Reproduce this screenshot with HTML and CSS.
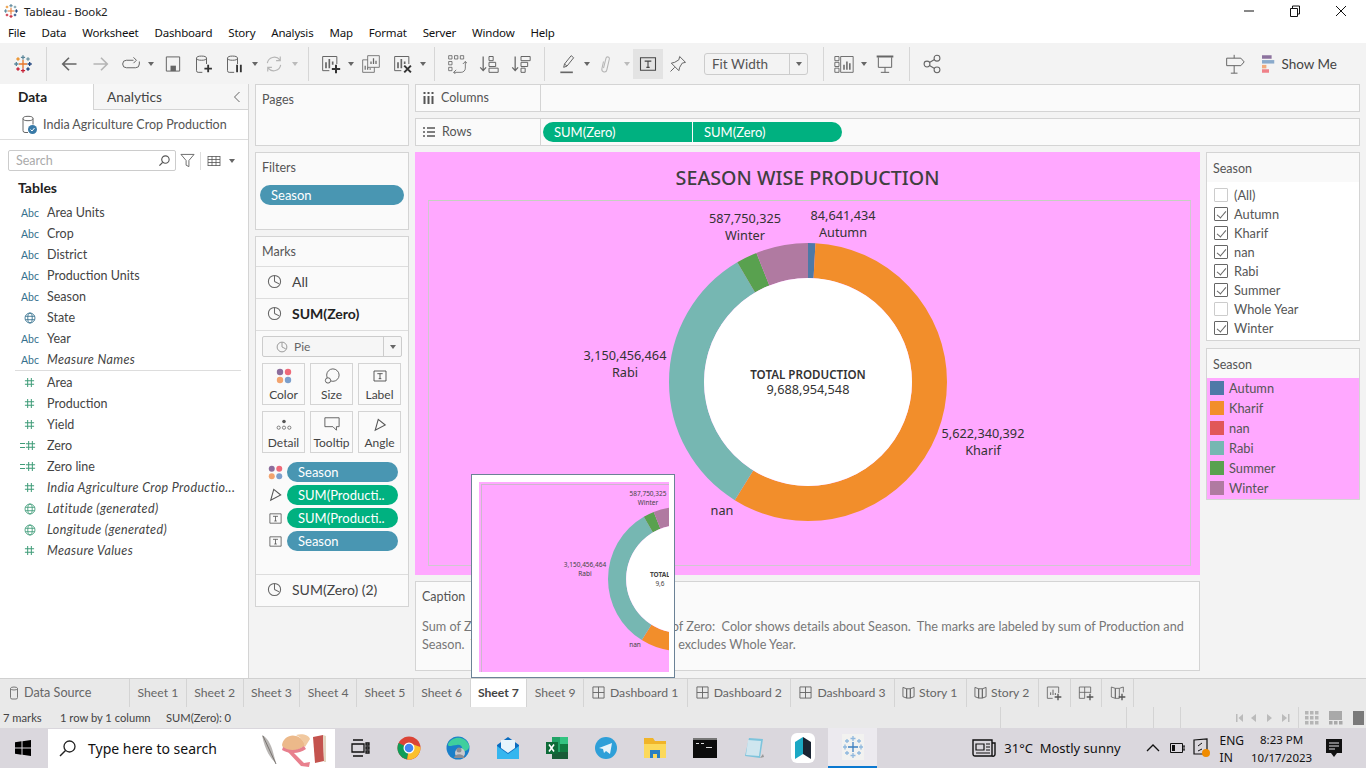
FILE: index.html
```html
<!DOCTYPE html>
<html lang="en">
<head>
    <meta charset="UTF-8">
    <title>Tableau - Book2</title>
    <link rel="stylesheet" href="styles.css">
</head>
<body>
    <!-- shared icons -->
    <svg class="defs" width="0" height="0">
        <symbol id="i-logo" viewBox="0 0 24 24"><g fill="none" stroke-width="1.6"><path d="M12 7v10M7 12h10" stroke="#e8762b"/><path d="M12 1.5v5M9.5 4h5" stroke="#5b879b"/><path d="M12 17.5v5M9.5 20h5" stroke="#c72035"/><path d="M1.500 12h5M4 9.5v5" stroke="#59879b"/><path d="M17.5 12h5M20 9.5v5" stroke="#1f447e"/><path d="M6 4v4M4 6h4" stroke="#eb912b"/><path d="M18 4v4M16 6h4" stroke="#7099a6"/><path d="M6 16v4M4 18h4" stroke="#c72035"/><path d="M18 16v4M16 18h4" stroke="#1f447e"/></g></symbol>
        <symbol id="i-back" viewBox="0 0 24 24"><path d="M21 12H5M12 4.5L4.5 12l7.5 7.5" fill="none" stroke="currentColor" stroke-width="2"/></symbol>
        <symbol id="i-fwd" viewBox="0 0 24 24"><path d="M3 12h16M12 4.5l7.5 7.5-7.5 7.5" fill="none" stroke="currentColor" stroke-width="2"/></symbol>
        <symbol id="i-redo" viewBox="0 0 24 24"><path d="M15 7.5H6.5a4.5 4.5 0 0 0 0 9h11a4.5 4.5 0 0 0 4.5-4.5V9M15 4l3.500 3.500L15 11" fill="none" stroke="currentColor" stroke-width="1.2"/></symbol>
        <symbol id="i-save" viewBox="0 0 24 24"><path d="M4 3.500h16v17H4z" fill="none" stroke="currentColor" stroke-width="1.2"/><path d="M9 14h6.500v6.500H9z" fill="currentColor"/></symbol>
        <symbol id="i-dbadd" viewBox="0 0 24 24"><g fill="none" stroke="currentColor" stroke-width="1.2"><ellipse cx="9" cy="5" rx="6" ry="2.5"/><path d="M3 5v15a2 2 0 0 0 2 2h5M15 5v7"/></g><path d="M17 13v9M12.5 17.5h9" stroke="#333" stroke-width="2.2"/></symbol>
        <symbol id="i-dbpause" viewBox="0 0 24 24"><g fill="none" stroke="currentColor" stroke-width="1.2"><ellipse cx="9" cy="5" rx="6" ry="2.5"/><path d="M3 5v15a2 2 0 0 0 2 2h6M15 5v7"/></g><path d="M14.5 13v9M19 13v9" stroke="#333" stroke-width="2.2"/></symbol>
        <symbol id="i-refresh" viewBox="0 0 24 24"><path d="M4 11a8.500 8.500 0 0 1 15-4M20 13a8.500 8.500 0 0 1-15 4M19.500 3v5h-5M4.500 21v-5h5" fill="none" stroke="currentColor" stroke-width="1.4"/></symbol>
        <symbol id="i-sheetadd" viewBox="0 0 24 24"><path d="M10 20H2V3h17v9" fill="none" stroke="currentColor" stroke-width="1.2"/><path d="M6 10v7M10 6v11M14 9v4" stroke="currentColor" stroke-width="2"/><path d="M18 13v10M13 18h10" stroke="#333" stroke-width="2.4"/></symbol>
        <symbol id="i-dup" viewBox="0 0 24 24"><path d="M8 2h14v14H8z" fill="#f3f3f3" stroke="currentColor"/><path d="M12 12V9M15 12V5M18 12V8" stroke="currentColor" stroke-width="1.5"/><path d="M8 7H2v15h14v-6" fill="none" stroke="currentColor"/><path d="M5 19v-5M8 19v-3M11 19v-2" stroke="currentColor" stroke-width="1.4"/></symbol>
        <symbol id="i-clear" viewBox="0 0 24 24"><path d="M10 20H2V3h17v9" fill="none" stroke="currentColor" stroke-width="1.2"/><path d="M6 10v7M10 6v11M14 9v3" stroke="currentColor" stroke-width="2"/><path d="M13.500 14l8 8M21.500 14l-8 8" stroke="#333" stroke-width="2.4"/></symbol>
        <symbol id="i-swap" viewBox="0 0 24 24"><g fill="none" stroke="currentColor"><path d="M2 2h4v4H2zM9 2h4v4H9zM16 2h4v4h-4zM2 9h4v4H2zM2 16h4v4H2zM8 22h9a5 5 0 0 0 5-5V9"/><path d="M19 12l3-3 3 3M11 19l-3 3 3 3"/></g></symbol>
        <symbol id="i-sortasc" viewBox="0 0 24 24"><path d="M5 3v17M1.500 16L5 20l3.500-4" fill="none" stroke="currentColor" stroke-width="1.5"/><path d="M12 3h5v5h-5zM12 10h8v5h-8zM12 17h11v5H12z" fill="none" stroke="currentColor" stroke-width="1.2"/></symbol>
        <symbol id="i-sortdesc" viewBox="0 0 24 24"><path d="M5 3v17M1.500 16L5 20l3.500-4" fill="none" stroke="currentColor" stroke-width="1.5"/><path d="M12 3h11v5H12zM12 10h8v5h-8zM12 17h5v5h-5z" fill="none" stroke="currentColor" stroke-width="1.2"/></symbol>
        <symbol id="i-pen" viewBox="0 0 24 24"><path d="M8 16l1-4 8-10 3 2.500-8 10zM9 12l3 2.500" fill="none" stroke="currentColor" stroke-width="1.2"/><path d="M4 22h15" stroke="currentColor" stroke-width="2"/></symbol>
        <symbol id="i-clip" viewBox="0 0 24 24"><path d="M9 9l-2 9a3 3 0 0 0 6 1l3-13a2 2 0 0 0-4-1l-3 12" fill="none" stroke="currentColor" stroke-width="1.3"/></symbol>
        <symbol id="i-t" viewBox="0 0 24 24"><path d="M3 4.500h18v15H3z" fill="none" stroke="currentColor" stroke-width="1.3"/><path d="M8 8.500h8M12 8.500V16M10 16h4" fill="none" stroke="currentColor" stroke-width="1.3"/></symbol>
        <symbol id="i-pin" viewBox="0 0 24 24"><path d="M14 3l7 7-4 1-3 5-1 4-9-9 4-1 5-3zM8 16l-5 5" fill="none" stroke="currentColor" stroke-width="1.2"/></symbol>
        <symbol id="i-cards" viewBox="0 0 24 24"><path d="M1 3h5v5H1zM1 10h5v5H1zM1 17h5v5H1zM8 3h15v19H8z" fill="none" stroke="currentColor" stroke-width="1.1"/><path d="M12 19v-6M15.500 19V9M19 19v-8" stroke="currentColor" stroke-width="1.8"/></symbol>
        <symbol id="i-present" viewBox="0 0 24 24"><path d="M2 3h20" stroke="currentColor" stroke-width="2.4"/><path d="M4 4v12h16V4M12 16v6M7 22h10" fill="none" stroke="currentColor" stroke-width="1.2"/></symbol>
        <symbol id="i-share" viewBox="0 0 24 24"><g fill="none" stroke="currentColor" stroke-width="1.3"><circle cx="6" cy="12" r="3.5"/><circle cx="18" cy="5" r="3.5"/><circle cx="18" cy="19" r="3.5"/><path d="M9 10.200l6-3.500M9 13.800l6 3.500"/></g></symbol>
        <symbol id="i-guide" viewBox="0 0 24 24"><path d="M2 5h17l4 4.500-4 4.500H2zM11 1v4M11 14v9M7 23h8" fill="none" stroke="currentColor" stroke-width="1.2"/></symbol>
        <symbol id="i-showme" viewBox="0 0 16 20"><path d="M0 0h11v4H0z" fill="#8c729e"/><path d="M0 5.500h14v4H0z" fill="#8aaacb"/><path d="M0 11h5v4H0z" fill="#f2ab7c"/><path d="M0 16h8v4H0z" fill="#ef8088"/></symbol>
        <symbol id="i-db" viewBox="0 0 16 20"><g fill="none" stroke="#666" stroke-width="1"><ellipse cx="7" cy="3.5" rx="5" ry="2.2"/><path d="M2 3.500v12a2 2 0 0 0 2 2h3M12 3.500v6"/></g><circle cx="11.5" cy="14.5" r="4.5" fill="#3a7ba8"/><path d="M9.500 14.500l1.500 1.500 2.500-3" fill="none" stroke="#fff"/></symbol>
        <symbol id="i-search" viewBox="0 0 14 14"><circle cx="8" cy="6" r="4" fill="none" stroke="#555" stroke-width="1.2"/><path d="M5 9l-3.500 3.500" stroke="#555" stroke-width="1.4"/></symbol>
        <symbol id="i-funnel" viewBox="0 0 16 16"><path d="M1 1.500h14L9.500 8v6.500l-3-1.500V8z" fill="none" stroke="#666"/></symbol>
        <symbol id="i-list" viewBox="0 0 14 12"><path d="M1 1.500h12M1 4.500h12M1 7.500h12M1 10.500h12M1 1v10M5 1v10M9 1v10M13 1v10" fill="none" stroke="#555" stroke-width=".8"/></symbol>
        <symbol id="i-hash" viewBox="0 0 12 12"><path d="M4 1v10M8 1v10M1 4h10M1 8h10" stroke="currentColor" stroke-width="1.1"/></symbol>
        <symbol id="i-globe" viewBox="0 0 14 14"><g fill="none" stroke="currentColor" stroke-width="1"><circle cx="7" cy="7" r="5.8"/><ellipse cx="7" cy="7" rx="2.6" ry="5.8"/><path d="M1.500 5h11M1.500 9h11"/></g></symbol>
        <symbol id="i-pie" viewBox="0 0 16 16"><circle cx="8" cy="8" r="6.5" fill="none" stroke="currentColor" stroke-width="1.1"/><path d="M8 8V2M8 8l5 2.500" stroke="currentColor" stroke-width="1.1" fill="none"/></symbol>
        <symbol id="i-dots" viewBox="0 0 16 16"><circle cx="4" cy="4" r="3.2" fill="#8c6d9c"/><circle cx="12" cy="4" r="3.2" fill="#ef6a79"/><circle cx="4" cy="12" r="3.2" fill="#f2a36e"/><circle cx="12" cy="12" r="3.2" fill="#7c9fcc"/></symbol>
        <symbol id="i-size" viewBox="0 0 18 18"><circle cx="10" cy="8" r="7" fill="#fafafa" stroke="#555"/><circle cx="4.5" cy="14" r="3" fill="#fafafa" stroke="#555"/></symbol>
        <symbol id="i-detail" viewBox="0 0 18 14"><circle cx="9" cy="3" r="2" fill="#555"/><circle cx="3" cy="10" r="1.8" fill="none" stroke="#555" stroke-width=".8"/><circle cx="9" cy="10" r="1.8" fill="none" stroke="#555" stroke-width=".8"/><circle cx="15" cy="10" r="1.8" fill="none" stroke="#555" stroke-width=".8"/></symbol>
        <symbol id="i-tip" viewBox="0 0 18 16"><path d="M1 1h16v10h-3v4l-4-4H1z" fill="none" stroke="#555"/></symbol>
        <symbol id="i-angle" viewBox="0 0 16 16"><path d="M6 1.500L14 8 2.500 14z" fill="none" stroke="#555" stroke-width="1.2"/></symbol>
        <symbol id="i-dash" viewBox="0 0 14 14"><path d="M1 1h12v12H1zM7 1v12M1 7h12" fill="none" stroke="#666"/></symbol>
        <symbol id="i-story" viewBox="0 0 14 14"><path d="M1 1.500L5 3v10l-4-1.500zM5 3h4v10H5zM9 3l4-1.500v10L9 13z" fill="none" stroke="#666"/></symbol>
        <symbol id="i-cyl" viewBox="0 0 10 14"><ellipse cx="5" cy="2.5" rx="3.5" ry="1.5" fill="none" stroke="#777"/><path d="M1.500 2.500v9A1.500 1.500 0 0 0 3 13h4a1.500 1.500 0 0 0 1.500-1.500v-9" fill="none" stroke="#777"/></symbol>
        <symbol id="i-donut" viewBox="0 0 278 278">
            <g fill="none" stroke-width="35" transform="rotate(-90 139 139)">
                <circle cx="139" cy="139" r="121.5" pathLength="360" stroke="#4e79a7" stroke-dasharray="3.1 360"/>
                <circle cx="139" cy="139" r="121.5" pathLength="360" stroke="#f28e2b" stroke-dasharray="208.7 360" stroke-dashoffset="-3.1"/>
                <circle cx="139" cy="139" r="121.5" pathLength="360" stroke="#76b7b2" stroke-dasharray="117.6 360" stroke-dashoffset="-211.8"/>
                <circle cx="139" cy="139" r="121.5" pathLength="360" stroke="#59a14f" stroke-dasharray="8.8 360" stroke-dashoffset="-329.4"/>
                <circle cx="139" cy="139" r="121.5" pathLength="360" stroke="#b07aa1" stroke-dasharray="21.8 360" stroke-dashoffset="-338.2"/>
            </g>
            <circle cx="139" cy="139" r="104" fill="#fff"/>
        </symbol>
    </svg>

    <header class="titlebar">
        <svg class="app-logo"><use href="#i-logo"/></svg>
        <span class="app-title">Tableau - Book2</span>
        <div class="win-btns">
            <svg width="12" height="12" viewBox="0 0 12 12"><path d="M1 6h10" stroke="#111"/></svg>
            <svg width="12" height="12" viewBox="0 0 12 12"><path d="M1.500 3.500h7v8h-7zM3.500 3.500V1h7v8H8.500" fill="none" stroke="#111"/></svg>
            <svg width="12" height="12" viewBox="0 0 12 12"><path d="M1 1l10 10M11 1L1 11" stroke="#111"/></svg>
        </div>
    </header>

    <nav class="menubar">
        <span>File</span><span>Data</span><span>Worksheet</span><span>Dashboard</span><span>Story</span><span>Analysis</span><span>Map</span><span>Format</span><span>Server</span><span>Window</span><span>Help</span>
    </nav>

    <div class="toolbar">
        <span class="tool w32 first"><svg><use href="#i-logo"/></svg></span>
        <i class="sep"></i>
        <span class="tool w32 after-sep"><svg><use href="#i-back"/></svg></span>
        <span class="tool w32 off"><svg><use href="#i-fwd"/></svg></span>
        <span class="tool w28"><svg><use href="#i-redo"/></svg></span>
        <span class="caret w12"></span>
        <span class="tool w32"><svg><use href="#i-save"/></svg></span>
        <span class="tool w30"><svg><use href="#i-dbadd"/></svg></span>
        <span class="tool w32"><svg><use href="#i-dbpause"/></svg></span>
        <span class="caret w8"></span>
        <span class="tool w30 off"><svg><use href="#i-refresh"/></svg></span>
        <span class="caret w12 off"></span>
        <i class="sep"></i>
        <span class="tool w32 after-sep"><svg><use href="#i-sheetadd"/></svg></span>
        <span class="caret w8"></span>
        <span class="tool w32"><svg><use href="#i-dup"/></svg></span>
        <span class="tool w32"><svg><use href="#i-clear"/></svg></span>
        <span class="caret w8"></span>
        <i class="sep"></i>
        <span class="tool w32 after-sep"><svg><use href="#i-swap"/></svg></span>
        <span class="tool w32"><svg><use href="#i-sortasc"/></svg></span>
        <span class="tool w32"><svg><use href="#i-sortdesc"/></svg></span>
        <i class="sep"></i>
        <span class="tool w32 after-sep"><svg><use href="#i-pen"/></svg></span>
        <span class="caret w8"></span>
        <span class="tool w30 off"><svg><use href="#i-clip"/></svg></span>
        <span class="caret w12 off"></span>
        <span class="tool w30 active"><svg><use href="#i-t"/></svg></span>
        <span class="tool w30"><svg><use href="#i-pin"/></svg></span>
        <div class="fit-select"><span class="fit-value">Fit Width</span><span class="fit-arrow"><b class="caret-shape"></b></span></div>
        <i class="sep sep-fit"></i>
        <span class="tool w28 after-sep"><svg><use href="#i-cards"/></svg></span>
        <span class="caret w12"></span>
        <span class="tool w30"><svg><use href="#i-present"/></svg></span>
        <i class="sep sep-show"></i>
        <span class="tool w32 after-sep"><svg><use href="#i-share"/></svg></span>
        <span class="tool w32 push"><svg><use href="#i-guide"/></svg></span>
        <span class="showme"><svg width="14" height="18"><use href="#i-showme"/></svg>Show Me</span>
    </div>

    <main class="workspace">
        <aside class="data-pane">
            <div class="pane-tabs">
                <span class="pane-tab current">Data</span>
                <span class="pane-tab">Analytics</span>
                <span class="pane-collapse">
                    <svg width="8" height="12" viewBox="0 0 8 12"><path d="M6.500 1l-5 5 5 5" fill="none" stroke="#666"/></svg>
                </span>
            </div>
            <div class="source-row"><svg width="16" height="20"><use href="#i-db"/></svg>India Agriculture Crop Production</div>
            <div class="search-row">
                <div class="search-box"><span>Search</span><svg width="13" height="13"><use href="#i-search"/></svg></div>
                <svg class="funnel" width="15" height="15"><use href="#i-funnel"/></svg>
                <i class="search-sep"></i>
                <svg class="list-icon" width="14" height="12"><use href="#i-list"/></svg>
                <b class="caret-shape"></b>
            </div>
            <h2 class="tables-title">Tables</h2>
            <ul class="field-list">
                <li><span class="abc">Abc</span>Area Units</li>
                <li><span class="abc">Abc</span>Crop</li>
                <li><span class="abc">Abc</span>District</li>
                <li><span class="abc">Abc</span>Production Units</li>
                <li><span class="abc">Abc</span>Season</li>
                <li><span class="fi dim"><svg width="12" height="12"><use href="#i-globe"/></svg></span>State</li>
                <li><span class="abc">Abc</span>Year</li>
                <li class="gen"><span class="abc">Abc</span>Measure Names</li>
            </ul>
            <ul class="field-list measures">
                <li><span class="fi"><svg width="11" height="11"><use href="#i-hash"/></svg></span>Area</li>
                <li><span class="fi"><svg width="11" height="11"><use href="#i-hash"/></svg></span>Production</li>
                <li><span class="fi"><svg width="11" height="11"><use href="#i-hash"/></svg></span>Yield</li>
                <li><span class="fi calc"><svg width="11" height="11"><use href="#i-hash"/></svg></span>Zero</li>
                <li><span class="fi calc"><svg width="11" height="11"><use href="#i-hash"/></svg></span>Zero line</li>
                <li class="gen"><span class="fi"><svg width="11" height="11"><use href="#i-hash"/></svg></span>India Agriculture Crop Productio...</li>
                <li class="gen"><span class="fi"><svg width="12" height="12"><use href="#i-globe"/></svg></span>Latitude (generated)</li>
                <li class="gen"><span class="fi"><svg width="12" height="12"><use href="#i-globe"/></svg></span>Longitude (generated)</li>
                <li class="gen"><span class="fi"><svg width="11" height="11"><use href="#i-hash"/></svg></span>Measure Values</li>
            </ul>
        </aside>

        <section class="cards-col">
            <div class="card pages-card"><div class="card-head">Pages</div></div>
            <div class="card filters-card">
                <div class="card-head">Filters</div>
                <div class="pill blue filter-pill">Season</div>
            </div>
            <div class="card marks-card">
                <div class="card-head marks-head">Marks</div>
                <div class="marks-row"><svg width="15" height="15"><use href="#i-pie"/></svg>All</div>
                <div class="marks-row strong"><svg width="15" height="15"><use href="#i-pie"/></svg>SUM(Zero)</div>
                <div class="marks-body">
                    <div class="mark-type">
                        <span class="mark-type-name"><svg width="12" height="12"><use href="#i-pie"/></svg>Pie</span>
                        <span class="mark-type-arrow"><b class="caret-shape"></b></span>
                    </div>
                    <div class="mark-grid">
                        <div class="mark-btn"><svg width="16" height="16"><use href="#i-dots"/></svg>Color</div>
                        <div class="mark-btn"><svg width="16" height="16"><use href="#i-size"/></svg>Size</div>
                        <div class="mark-btn"><svg width="16" height="16"><use href="#i-t"/></svg>Label</div>
                        <div class="mark-btn"><svg width="16" height="14"><use href="#i-detail"/></svg>Detail</div>
                        <div class="mark-btn"><svg width="16" height="16"><use href="#i-tip"/></svg>Tooltip</div>
                        <div class="mark-btn"><svg width="14" height="14"><use href="#i-angle"/></svg>Angle</div>
                    </div>
                    <div class="mark-pills">
                        <div class="mark-line"><svg width="15" height="15"><use href="#i-dots"/></svg><div class="pill blue">Season</div></div>
                        <div class="mark-line"><svg width="14" height="14"><use href="#i-angle"/></svg><div class="pill green">SUM(Producti..</div></div>
                        <div class="mark-line"><svg width="15" height="15"><use href="#i-t"/></svg><div class="pill green">SUM(Producti..</div></div>
                        <div class="mark-line"><svg width="15" height="15"><use href="#i-t"/></svg><div class="pill blue">Season</div></div>
                    </div>
                </div>
                <div class="marks-row last"><svg width="15" height="15"><use href="#i-pie"/></svg>SUM(Zero) (2)</div>
            </div>
        </section>

        <section class="center-col">
            <div class="shelf">
                <span class="shelf-name"><svg width="11" height="12" viewBox="0 0 11 12"><path d="M1.500 0v2M5.500 0v2M9.500 0v2M1.500 4v8M5.500 4v8M9.500 4v8" stroke="#555" stroke-width="2"/></svg>Columns</span>
            </div>
            <div class="shelf">
                <span class="shelf-name"><svg width="12" height="10" viewBox="0 0 12 10"><path d="M0 1h2M4 1h8M0 5h2M4 5h8M0 9h2M4 9h8" stroke="#555" stroke-width="1.6"/></svg>Rows</span>
                <div class="shelf-pills">
                    <div class="pill green left-round">SUM(Zero)</div>
                    <div class="pill green right-round">SUM(Zero)</div>
                </div>
            </div>
            <div class="view-row">
                <div class="view-col">
                    <div class="view">
                        <h1 class="view-title">SEASON WISE PRODUCTION</h1>
                        <div class="view-pane"></div>
                        <svg class="donut"><use href="#i-donut"/></svg>
                        <div class="lbl lbl-autumn">84,641,434<br>Autumn</div>
                        <div class="lbl lbl-winter">587,750,325<br>Winter</div>
                        <div class="lbl lbl-rabi">3,150,456,464<br>Rabi</div>
                        <div class="lbl lbl-kharif">5,622,340,392<br>Kharif</div>
                        <div class="lbl lbl-nan">nan</div>
                        <div class="lbl lbl-total"><b>TOTAL PRODUCTION</b><br>9,688,954,548</div>
                    </div>
                    <div class="caption">
                        <div class="caption-head">Caption</div>
                        <p>Sum of Zero and sum of Zero.&nbsp; For pane Sum of Zero:&nbsp; Color shows details about Season.&nbsp; The marks are labeled by sum of Production and<br>Season.&nbsp; The view is filtered on Season, which excludes Whole Year.</p>
                    </div>
                </div>
                <div class="side-col">
                    <div class="side-card">
                        <div class="side-head">Season</div>
                        <ul class="check-list">
                            <li><i class="box"></i>(All)</li>
                            <li><i class="box on"></i>Autumn</li>
                            <li><i class="box on"></i>Kharif</li>
                            <li><i class="box on"></i>nan</li>
                            <li><i class="box on"></i>Rabi</li>
                            <li><i class="box on"></i>Summer</li>
                            <li><i class="box"></i>Whole Year</li>
                            <li><i class="box on"></i>Winter</li>
                        </ul>
                    </div>
                    <div class="side-card">
                        <div class="side-head">Season</div>
                        <ul class="legend">
                            <li><i class="swatch c-autumn"></i>Autumn</li>
                            <li><i class="swatch c-kharif"></i>Kharif</li>
                            <li><i class="swatch c-nan"></i>nan</li>
                            <li><i class="swatch c-rabi"></i>Rabi</li>
                            <li><i class="swatch c-summer"></i>Summer</li>
                            <li><i class="swatch c-winter"></i>Winter</li>
                        </ul>
                    </div>
                </div>
            </div>
        </section>

        <!-- sheet preview while hovering the tab -->
        <div class="preview">
            <div class="preview-pink">
                <div class="preview-frame"></div>
                <svg class="preview-donut"><use href="#i-donut"/></svg>
                <div class="plbl plbl-winter">587,750,325<br>Winter</div>
                <div class="plbl plbl-rabi">3,150,456,464<br>Rabi</div>
                <div class="plbl plbl-nan">nan</div>
                <div class="plbl plbl-total"><b>TOTAL</b><br>9,6</div>
            </div>
        </div>
    </main>

    <div class="tabs">
        <span class="tab t-source"><svg width="10" height="14"><use href="#i-cyl"/></svg>Data Source</span>
        <span class="tab t-sheet">Sheet 1</span>
        <span class="tab t-sheet">Sheet 2</span>
        <span class="tab t-sheet">Sheet 3</span>
        <span class="tab t-sheet">Sheet 4</span>
        <span class="tab t-sheet">Sheet 5</span>
        <span class="tab t-sheet">Sheet 6</span>
        <span class="tab t-sheet current">Sheet 7</span>
        <span class="tab t-sheet">Sheet 9</span>
        <span class="tab t-dash"><svg width="13" height="13"><use href="#i-dash"/></svg>Dashboard 1</span>
        <span class="tab t-dash"><svg width="13" height="13"><use href="#i-dash"/></svg>Dashboard 2</span>
        <span class="tab t-dash"><svg width="13" height="13"><use href="#i-dash"/></svg>Dashboard 3</span>
        <span class="tab t-story"><svg width="13" height="13"><use href="#i-story"/></svg>Story 1</span>
        <span class="tab t-story"><svg width="13" height="13"><use href="#i-story"/></svg>Story 2</span>
        <span class="tab t-add"><svg width="16" height="16" viewBox="0 0 24 24"><path d="M10 20H2V3h17v9" fill="none" stroke="#666" stroke-width="1.3"/><path d="M7 15v-4M10.500 15V7M14 15v-3" stroke="#666" stroke-width="1.5"/><path d="M18 13v10M13 18h10" stroke="#555" stroke-width="2"/></svg></span>
        <span class="tab t-add"><svg width="16" height="16" viewBox="0 0 24 24"><path d="M10 20H2V3h17v9M2 11h17M10 3v17" fill="none" stroke="#666" stroke-width="1.3"/><path d="M18 13v10M13 18h10" stroke="#555" stroke-width="2"/></svg></span>
        <span class="tab t-add"><svg width="16" height="16" viewBox="0 0 24 24"><path d="M2 3l6 2v15l-6-2zM8 5h6v15H8zM14 5l6-2v8" fill="none" stroke="#666" stroke-width="1.3"/><path d="M18 13v10M13 18h10" stroke="#555" stroke-width="2"/></svg></span>
    </div>

    <div class="statusbar">
        <span class="st-marks">7 marks</span>
        <span class="st-rows">1 row by 1 column</span>
        <span class="st-sum">SUM(Zero): 0</span>
        <i class="st-cell c1"></i><i class="st-cell c2"></i><i class="st-cell c3"></i><i class="st-cell c4"></i>
        <span class="st-nav">
            <svg width="60" height="10" viewBox="0 0 60 10"><path d="M0 1h1.500v8H0zM7 1L2.500 5 7 9zM20 1l-5 4 5 4zM31 1l5 4-5 4zM46 1l5 4-5 4zM52 1h1.500v8H52z" fill="#bbb"/></svg>
        </span>
        <i class="st-cell c5"></i>
        <span class="st-views">
            <svg width="14" height="14" viewBox="0 0 14 14"><path d="M0 0h3.500v3.500H0zM5 0h3.500v3.500H5zM10 0h3.500v3.500H10zM0 5h3.500v3.500H0zM5 5h3.500v3.500H5zM10 5h3.500v3.500H10zM0 10h3.500v3.500H0zM5 10h3.500v3.500H5zM10 10h3.500v3.500H10z" fill="#b5b5b5"/></svg>
            <svg width="14" height="14" viewBox="0 0 14 14"><path d="M0 0h13v9H0zM0 10h3.500v3.500H0zM5 10h3.500v3.500H5zM10 10h3.500v3.500H10z" fill="#a9a9a9"/></svg>
            <svg width="11" height="14" viewBox="0 0 11 14"><path d="M0 0h11v14H0z" fill="#7a7a7a"/></svg>
        </span>
    </div>

    <footer class="taskbar">
        <span class="start">
            <svg width="16" height="16" viewBox="0 0 16 16"><path d="M0 2.200l6.500-.9v6.200H0zM7.500 1.200L16 0v7.500H7.500zM0 8.500h6.500v6.200L0 13.800zM7.500 8.500H16V16l-8.500-1.200z" fill="#000"/></svg>
        </span>
        <div class="task-search">
            <svg width="17" height="17" viewBox="0 0 17 17"><circle cx="10.5" cy="6.5" r="5.5" fill="none" stroke="#222" stroke-width="1.3"/><path d="M6.500 10.500L1 16" stroke="#222" stroke-width="1.5"/></svg>
            <span class="task-search-text">Type here to search</span>
            <svg class="doodle" width="72" height="38" viewBox="0 0 72 38">
                <path d="M3 5c5 2 9 9 11 17l3 11c-5-4-11-12-14-28z" fill="#b9b6b4"/><path d="M4 6l13 28" stroke="#77736f"/>
                <path d="M23 15c1-7 8-11 14-9 5 1 9 6 9 10l-8 4c-7 2-14 0-15-5z" fill="#ecb98a"/>
                <path d="M37 5c6-2 13 0 14 4l-5 8c-1-5-4-10-9-12z" fill="#f1c9a0"/>
                <path d="M24 17c6 4 14 4 21-1l2 3c-7 5-17 5-24 1z" fill="#e77f8d"/>
                <path d="M33 21l12 12 6-1-1 5-8-1-13-14z" fill="#e9808e"/>
                <path d="M54 7l10-2 1 26-9 2z" fill="#c4534e"/><path d="M64 5l3 1v26h-2z" fill="#e3d5c0"/>
            </svg>
        </div>
        <div class="task-icons">
            <span class="task-ic"><svg width="20" height="18" viewBox="0 0 20 18"><path d="M3 1h10M3 17h10M2 5h12v8H2zM16 4h3v2h-3zM16 8h3v2h-3zM16 12h3v2h-3z" fill="none" stroke="#111" stroke-width="1.3"/></svg></span>
            <span class="task-ic"><svg width="24" height="24" viewBox="0 0 24 24"><circle cx="12" cy="12" r="11.5" fill="#db4437"/><path d="M12 12L1.600 7A11.500 11.500 0 0 0 10 23.300z" fill="#0f9d58"/><path d="M12 12l-1.800 11.400A11.500 11.500 0 0 0 23.400 11L12 7z" fill="#fbc02d"/><circle cx="12" cy="12" r="5.5" fill="#fff"/><circle cx="12" cy="12" r="4.3" fill="#4285f4"/></svg></span>
            <span class="task-ic"><svg width="24" height="24" viewBox="0 0 24 24"><circle cx="12" cy="12" r="11.5" fill="#1a7fc9"/><path d="M2 8c3-7 16-10 21 1 1 5-4 7-8 6 3-3 0-7-4-6-5 0-9 3-9-1z" fill="#3fcf9d"/><circle cx="14" cy="17" r="5" fill="#c9c9cd"/><circle cx="13" cy="14" r="2.5" fill="#8b8d94"/><path d="M8 22c1-5 9-5 11 0z" fill="#8b8d94"/></svg></span>
            <span class="task-ic"><svg width="24" height="22" viewBox="0 0 24 22"><path d="M1 8l11-8 11 8v14H1z" fill="#0a6cbf"/><path d="M1 9l11 8 11-8v13H1z" fill="#35b6ef"/><path d="M5 3h14v8l-7 5-7-5z" fill="#e6f4fc"/></svg></span>
            <span class="task-ic"><svg width="24" height="24" viewBox="0 0 24 24"><path d="M7 1h16v22H7z" fill="#21a366"/><path d="M15 1h8v7h-8z" fill="#33c481"/><path d="M15 8h8v8h-8z" fill="#107c41"/><path d="M7 16h16v7H7z" fill="#185c37"/><path d="M1 6h12v12H1z" fill="#0e6b38"/><path d="M4 8.500l5 7M9 8.500l-5 7" stroke="#fff" stroke-width="1.6"/></svg></span>
            <span class="task-ic"><svg width="24" height="24" viewBox="0 0 24 24"><circle cx="12" cy="12" r="11" fill="#2e9fd8"/><path d="M5 12l13-5-2 11-4-3-2 2-1-4z" fill="#e8f4fa"/></svg></span>
            <span class="task-ic"><svg width="24" height="22" viewBox="0 0 24 22"><path d="M1 1h9l2 3h11v17H1z" fill="#f0b429"/><path d="M1 7h22v14H1z" fill="#fcd95a"/><path d="M7 21v-8h10v8h-3v-4h-4v4z" fill="#2a7fc2"/></svg></span>
            <span class="task-ic"><svg width="24" height="20" viewBox="0 0 24 20"><path d="M0 0h24v20H0z" fill="#0c0c0c"/><path d="M0 0h24v2H0z" fill="#777"/><path d="M3 5h3v1H3zM8 5h3v1H8zM13 9h6v1h-6z" fill="#ddd"/></svg></span>
            <span class="task-ic"><svg width="22" height="24" viewBox="0 0 22 24"><path d="M6 2l14 1-3 19-15-2z" fill="#7dc4dc"/><path d="M5 4l13 1-2 15-13-1z" fill="#cfe6ef"/><path d="M17 22l3-4 1 3z" fill="#999"/></svg></span>
            <span class="task-ic"><svg width="24" height="30" viewBox="0 0 24 30"><rect width="24" height="30" rx="6" fill="#fff"/><path d="M12 4L4 9v17l8-5z" fill="#1ba8c4"/><path d="M12 4l8 5v17l-8-5z" fill="#1a2433"/></svg></span>
            <span class="task-ic active-app">
                <svg width="22" height="26" viewBox="0 0 22 26"><path d="M0 0h22v26H0z" fill="#f2f2f0"/><g fill="none" stroke-width="1.3"><path d="M11 8v10M6 13h10" stroke="#3c7fc0"/><path d="M11 2v5M8.500 4.500h5M11 19v5M8.500 21.500h5M1 13h4M3 10.500v5M17 13h4M19 10.500v5M5 5v4M3 7h4M17 5v4M15 7h4M5 17v4M3 19h4M17 17v4M15 19h4" stroke="#8fb8de"/></g></svg>
            </span>
        </div>
        <div class="tray">
            <svg class="news" width="24" height="18" viewBox="0 0 24 18"><path d="M1 1h19v16H3a2 2 0 0 1-2-2zM20 4h3v11a2 2 0 0 1-3 2" fill="none" stroke="#111" stroke-width="1.4"/><path d="M4 5h8v6H4zM14 5h4M14 8h4M14 11h4M4 14h14" fill="none" stroke="#111" stroke-width="1.2"/></svg>
            <span class="weather">31°C&nbsp; Mostly sunny</span>
            <svg class="tray-up" width="14" height="8" viewBox="0 0 14 8"><path d="M1 7l6-6 6 6" fill="none" stroke="#111" stroke-width="1.3"/></svg>
            <svg class="battery" width="15" height="10" viewBox="0 0 15 10"><path d="M.5 .5h12v9H.5zM13 3h2v4h-2z" fill="none" stroke="#111"/><path d="M2 2h3v6H2z" fill="#111"/></svg>
            <svg class="tablet" width="18" height="20" viewBox="0 0 18 20"><path d="M1 2l13-1v15H1z" fill="none" stroke="#111" stroke-width="1.2"/><path d="M5 8l4-3M9 11l-4 2" stroke="#111"/><circle cx="13" cy="15" r="4" fill="#f08c00"/></svg>
            <div class="lang">ENG<br>IN</div>
            <div class="clock">8:23 PM<br>10/17/2023</div>
            <svg class="notify" width="16" height="18" viewBox="0 0 16 18"><path d="M0 0h16v14h-5l-3 4-3-4H0z" fill="#111"/><path d="M3 4h10M3 7h10M3 10h6" stroke="#e4e2e7"/></svg>
        </div>
    </footer>
</body>
</html>
```

FILE: styles.css
```css
* {
    box-sizing: border-box;
}

body {
    margin: 0;
    width: 1366px;
    height: 768px;
    overflow: hidden;
    display: flex;
    flex-direction: column;
    background: #f3f3f3;
    font-family: "Lato", "Noto Sans", sans-serif;
    font-size: 12.5px;
    color: #333;
}

ul {
    list-style: none;
    margin: 0;
    padding: 0;
}

.defs {
    position: absolute;
}

/* window title and menu */
.titlebar {
    height: 22px;
    background: #fff;
    display: flex;
    align-items: center;
    flex-shrink: 0;
}

.app-logo {
    width: 16px;
    height: 16px;
    margin-left: 3px;
}

.app-title {
    margin-left: 5px;
    font-family: "Noto Sans", sans-serif;
    font-size: 11.5px;
    letter-spacing: -0.15px;
    color: #222;
}

.win-btns {
    margin-left: auto;
    display: flex;
    gap: 34px;
    padding-right: 19px;
}

.menubar {
    height: 21px;
    background: #fff;
    display: flex;
    align-items: center;
    gap: 16px;
    padding-left: 8px;
    font-family: "Noto Sans", sans-serif;
    font-size: 11.5px;
    letter-spacing: -0.2px;
    color: #111;
    flex-shrink: 0;
}

/* toolbar */
.toolbar {
    height: 41px;
    display: flex;
    align-items: center;
    background: #f3f3f3;
    flex-shrink: 0;
    color: #666;
}

.tool {
    height: 30px;
    display: flex;
    align-items: center;
    justify-content: center;
}

.tool svg {
    width: 20px;
    height: 20px;
}

.tool.off {
    color: #b5b5b5;
}

.tool.active {
    background: #e3e3e3;
    color: #444;
}

.tool.first {
    margin-left: 7px;
}

.w28 { width: 28px; }
.w30 { width: 30px; }
.w32 { width: 32px; }
.w8 { width: 8px; }
.w12 { width: 12px; }

.sep {
    width: 1px;
    height: 34px;
    background: #d6d6d6;
    margin-left: 7px;
}

.sep-fit {
    margin-left: 15px;
}

.sep-show {
    margin-left: 9px;
}

.after-sep {
    margin-left: 6px;
}

.caret {
    display: flex;
    align-items: center;
    justify-content: center;
}

.caret::after,
.caret-shape {
    content: "";
    display: inline-block;
    border-left: 3.5px solid transparent;
    border-right: 3.5px solid transparent;
    border-top: 4px solid #666;
}

.caret.off::after {
    border-top-color: #bbb;
}

.fit-select {
    width: 104px;
    height: 22px;
    margin-left: 11px;
    border: 1px solid #ccc;
    border-radius: 3px;
    background: #f3f3f3;
    display: flex;
    align-items: center;
    font-size: 13.5px;
    color: #555;
}

.fit-value {
    flex: 1;
    padding-left: 7px;
}

.fit-arrow {
    width: 18px;
    height: 100%;
    border-left: 1px solid #ccc;
    display: flex;
    align-items: center;
    justify-content: center;
}

.push {
    margin-left: auto;
}

.showme {
    display: flex;
    align-items: center;
    gap: 5px;
    margin-left: 11px;
    padding-right: 29px;
    font-size: 13.5px;
    color: #444;
}

/* main area */
.workspace {
    position: relative;
    flex: 1;
    min-height: 0;
    display: flex;
    background: #f3f3f3;
}

.data-pane {
    width: 249px;
    background: #fff;
    border-right: 1px solid #d4d4d4;
    flex-shrink: 0;
}

.pane-tabs {
    height: 26px;
    display: flex;
    background: #f6f6f6;
    border-bottom: 1px solid #d4d4d4;
}

.pane-tab {
    width: 93px;
    padding-left: 18px;
    line-height: 26px;
    font-size: 13.7px;
    color: #444;
}

.pane-tab + .pane-tab {
    padding-left: 13px;
    width: 120px;
    border-left: 1px solid #d4d4d4;
}

.pane-tab.current {
    background: #fff;
    font-weight: 700;
    color: #222;
    height: 26px;
}

.pane-collapse {
    margin-left: 20px;
    display: flex;
    align-items: center;
}

.source-row {
    height: 30px;
    display: flex;
    align-items: center;
    gap: 6px;
    padding-left: 21px;
    border-bottom: 1px solid #ddd;
    color: #555;
}

.search-row {
    height: 21px;
    margin-top: 10px;
    padding-left: 8px;
    display: flex;
    align-items: center;
}

.search-box {
    width: 168px;
    height: 21px;
    border: 1px solid #ccc;
    border-radius: 2px;
    display: flex;
    align-items: center;
    justify-content: space-between;
    padding: 0 4px 0 7px;
    color: #aaa;
}

.funnel {
    margin-left: 4px;
}

.search-sep {
    width: 1px;
    height: 18px;
    background: #ddd;
    margin-left: 5px;
}

.list-icon {
    margin: 0 8px 0 6px;
}

.tables-title {
    margin: 7px 0 4px 18px;
    font-size: 14px;
    line-height: 20px;
    font-weight: 700;
    color: #222;
}

.field-list li {
    height: 21px;
    display: flex;
    align-items: center;
    white-space: nowrap;
    color: #444;
}

.field-list li.gen {
    font-style: italic;
    letter-spacing: 0.37px;
}

.measures {
    border-top: 1px solid #ddd;
    margin: 0 7px 0 15px;
    padding-top: 1px;
}

.measures li {
    margin-left: -15px;
}

.abc,
.fi {
    width: 47px;
    padding-left: 21px;
    flex-shrink: 0;
    display: flex;
    align-items: center;
}

.abc {
    font-size: 10.5px;
    font-style: normal;
    letter-spacing: 0;
    color: #35708d;
}

.fi {
    padding-left: 24px;
    color: #3f9c78;
}

.fi.dim {
    color: #35708d;
}

.fi.calc::before {
    content: "";
    width: 5px;
    height: 3px;
    border-top: 1px solid #3f9c78;
    border-bottom: 1px solid #3f9c78;
    margin-left: -4px;
}

.cards-col {
    width: 154px;
    margin-left: 6px;
    display: flex;
    flex-direction: column;
    gap: 6px;
    flex-shrink: 0;
}

.card {
    background: #fafafa;
    border: 1px solid #d4d4d4;
}

.card-head {
    padding: 7px 0 0 6px;
    font-size: 12.5px;
    line-height: 16px;
    color: #555;
}

.pages-card {
    height: 62px;
}

.filters-card {
    height: 78px;
}

.pill {
    height: 20px;
    line-height: 20px;
    border-radius: 10px;
    color: #fff;
    padding-left: 11px;
    font-size: 13px;
    white-space: nowrap;
    overflow: hidden;
}

.pill.blue {
    background: #4996b2;
}

.pill.green {
    background: #00b180;
}

.filter-pill {
    margin: 9px 4px 0 4px;
}

.marks-card {
    height: 371px;
    display: flex;
    flex-direction: column;
}

.marks-head {
    height: 29px;
    flex-shrink: 0;
}

.marks-row {
    height: 32px;
    flex-shrink: 0;
    display: flex;
    align-items: center;
    gap: 10px;
    padding: 0 0 3px 11px;
    border-top: 1px solid #ddd;
    font-size: 14px;
    color: #444;
    white-space: nowrap;
}

.marks-row svg {
    color: #666;
    flex-shrink: 0;
}

.marks-row.strong {
    font-weight: 700;
    color: #222;
}

.marks-row.last {
    margin-top: auto;
}

.marks-body {
    border-top: 1px solid #ddd;
    padding: 5px 6px 0 6px;
}

.mark-type {
    height: 21px;
    border: 1px solid #ccc;
    border-radius: 2px;
    display: flex;
    align-items: center;
    background: #f6f6f6;
}

.mark-type-name {
    flex: 1;
    display: flex;
    align-items: center;
    gap: 6px;
    padding-left: 13px;
    color: #666;
    font-size: 12px;
}

.mark-type-name svg {
    color: #888;
}

.mark-type-arrow {
    width: 18px;
    height: 100%;
    border-left: 1px solid #ccc;
    display: flex;
    align-items: center;
    justify-content: center;
}

.mark-grid {
    display: grid;
    grid-template-columns: repeat(3, 43px);
    grid-auto-rows: 42px;
    gap: 6px 5px;
    margin-top: 6px;
    color: #555;
}

.mark-btn {
    border: 1px solid #d4d4d4;
    display: flex;
    flex-direction: column;
    align-items: center;
    justify-content: flex-end;
    gap: 3px;
    padding-bottom: 2px;
    font-size: 12px;
    color: #444;
}

.mark-pills {
    margin-top: 9px;
    display: flex;
    flex-direction: column;
    gap: 3px;
}

.mark-line {
    display: flex;
    align-items: center;
    color: #555;
}

.mark-line svg {
    width: 15px;
    margin-left: 6px;
    margin-right: 4px;
    flex-shrink: 0;
}

.mark-line .pill {
    width: 111px;
}

.center-col {
    width: 945px;
    margin-left: 6px;
    display: flex;
    flex-direction: column;
    flex-shrink: 0;
}

.shelf {
    height: 28px;
    margin-bottom: 6px;
    background: #fafafa;
    border: 1px solid #d4d4d4;
    display: flex;
    align-items: center;
}

.shelf-name {
    width: 125px;
    height: 100%;
    display: flex;
    align-items: center;
    gap: 7px;
    padding: 0 0 1px 7px;
    border-right: 1px solid #d4d4d4;
    color: #555;
}

.shelf-pills {
    display: flex;
    gap: 1px;
    margin-left: 2px;
}

.shelf-pills .pill {
    width: 149px;
    border-radius: 0;
}

.shelf-pills .left-round {
    border-radius: 10px 0 0 10px;
}

.shelf-pills .right-round {
    border-radius: 0 10px 10px 0;
}

.view-row {
    display: flex;
    gap: 6px;
}

.view-col {
    width: 785px;
    display: flex;
    flex-direction: column;
    gap: 6px;
}

.view {
    position: relative;
    height: 423px;
    background: #ffa8ff;
}

.view-title {
    margin: 0;
    padding-top: 12px;
    text-align: center;
    font-family: "Noto Sans", sans-serif;
    font-size: 19.7px;
    line-height: 27px;
    font-weight: 500;
    color: #3f3f3f;
}

.view-pane {
    position: absolute;
    left: 13px;
    top: 48px;
    width: 763px;
    height: 366px;
    border: 1px solid #d0c8d0;
    border-top-color: #c5cfc0;
}

.donut {
    position: absolute;
    left: 254px;
    top: 91px;
    width: 278px;
    height: 278px;
}

.lbl {
    position: absolute;
    transform: translateX(-50%);
    text-align: center;
    line-height: 17px;
    font-family: "Noto Sans", sans-serif;
    font-size: 12.7px;
    color: #333;
    white-space: nowrap;
}

.lbl-autumn { left: 428px; top: 55px; }
.lbl-winter { left: 330px; top: 58px; }
.lbl-rabi { left: 210px; top: 195px; }
.lbl-kharif { left: 568px; top: 273px; }
.lbl-nan { left: 307px; top: 350px; }
.lbl-total { left: 393px; top: 215px; line-height: 15px; }

.lbl-total b {
    font-size: 11.6px;
    font-weight: 600;
}

.caption {
    height: 90px;
    background: #fafafa;
    border: 1px solid #d4d4d4;
    padding: 7px 6px;
    color: #777;
}

.caption-head {
    font-size: 12.5px;
    line-height: 16px;
    color: #555;
}

.caption p {
    margin: 12px 0 0;
    font-size: 12.7px;
    line-height: 18px;
    white-space: nowrap;
}

.side-col {
    width: 154px;
    display: flex;
    flex-direction: column;
    gap: 7px;
}

.side-card {
    border: 1px solid #d4d4d4;
    background: #fff;
}

.side-head {
    height: 29px;
    padding-left: 6px;
    line-height: 31px;
    background: #f9f9f9;
    color: #555;
}

.check-list {
    padding: 3px 0 3px 7px;
}

.check-list li {
    height: 19px;
    display: flex;
    align-items: center;
    gap: 6px;
    font-size: 12.8px;
    color: #555;
}

.box {
    width: 14px;
    height: 14px;
    border: 1px solid #ccc;
    border-radius: 1px;
    position: relative;
}

.box.on {
    border-color: #666;
}

.box.on::after {
    content: "";
    position: absolute;
    left: 4px;
    top: 1px;
    width: 4px;
    height: 8px;
    border-right: 1.5px solid #666;
    border-bottom: 1.5px solid #666;
    transform: rotate(40deg);
}

.legend {
    background: #ffa8ff;
    padding: 0 0 1px 3px;
}

.legend li {
    height: 20px;
    display: flex;
    align-items: center;
    gap: 5px;
    font-size: 12.8px;
    color: #555;
}

.swatch {
    width: 14px;
    height: 14px;
}

.c-autumn { background: #4e79a7; }
.c-kharif { background: #f28e2b; }
.c-nan { background: #e15759; }
.c-rabi { background: #76b7b2; }
.c-summer { background: #59a14f; }
.c-winter { background: #b07aa1; }

/* sheet preview over the view */
.preview {
    position: absolute;
    left: 471px;
    top: 390px;
    width: 204px;
    height: 204px;
    padding: 7px 5px 5px 7px;
    background: #fff;
    border: 1px solid #6b8296;
}

.preview-pink {
    position: relative;
    width: 190px;
    height: 190px;
    background: #ffa8ff;
    overflow: hidden;
}

.preview-frame {
    position: absolute;
    left: 2px;
    top: 2px;
    width: 200px;
    height: 200px;
    border: 1px solid #cdb8cd;
}

.preview-donut {
    position: absolute;
    left: 129px;
    top: 25px;
    width: 144px;
    height: 144px;
}

.plbl {
    position: absolute;
    transform: translateX(-50%);
    text-align: center;
    font-family: "Noto Sans", sans-serif;
    font-size: 6.5px;
    line-height: 8.5px;
    color: #444;
    white-space: nowrap;
}

.plbl-winter { left: 169px; top: 8px; }
.plbl-rabi { left: 106px; top: 79px; }
.plbl-nan { left: 156px; top: 159px; }
.plbl-total { left: 181px; top: 89px; }

/* sheet tabs */
.tabs {
    height: 29px;
    display: flex;
    background: #e9e9e9;
    border-top: 1px solid #d0d0d0;
    flex-shrink: 0;
}

.tab {
    display: flex;
    align-items: center;
    justify-content: center;
    gap: 5px;
    padding-bottom: 1px;
    border-right: 1px solid #d4d4d4;
    color: #666;
    font-size: 12.2px;
    white-space: nowrap;
}

.t-source {
    width: 130px;
    justify-content: flex-start;
    padding-left: 9px;
    font-size: 12.6px;
}

.t-sheet { width: 56.75px; }

.t-dash {
    width: 103.7px;
    justify-content: flex-start;
    padding-left: 8px;
}

.t-story {
    width: 72px;
    justify-content: flex-start;
    padding-left: 7px;
    gap: 4px;
}

.t-add { width: 31.7px; }

.tab.current {
    background: #fff;
    font-weight: 700;
    color: #444;
}

.statusbar {
    position: relative;
    height: 21px;
    display: flex;
    align-items: center;
    background: #e9e9e9;
    color: #444;
    font-size: 11.2px;
    flex-shrink: 0;
}

.st-marks { width: 57px; margin-left: 3px; }
.st-rows { width: 106px; }

.st-cell {
    position: absolute;
    top: 0;
    width: 1px;
    height: 21px;
    background: #d4d4d4;
}

.c1 { left: 1000px; }
.c2 { left: 1126px; }
.c3 { left: 1153px; }
.c4 { left: 1180px; }
.c5 { left: 1298px; }

.st-nav {
    position: absolute;
    left: 1236px;
    top: 6px;
    line-height: 0;
}

.st-views {
    position: absolute;
    left: 1305px;
    top: 4px;
    display: flex;
    gap: 10px;
}

/* windows taskbar */
.taskbar {
    height: 40px;
    display: flex;
    align-items: center;
    background: #dad7dd;
    color: #111;
    font-family: "Noto Sans", sans-serif;
    flex-shrink: 0;
}

.start {
    width: 48px;
    padding-left: 15px;
    display: flex;
    align-items: center;
}

.task-search {
    width: 287px;
    height: 39px;
    margin-top: 1px;
    background: #fff;
    display: flex;
    align-items: center;
    padding-left: 11px;
    gap: 12px;
    font-size: 14px;
}

.task-search-text {
    width: 133px;
    white-space: nowrap;
}

.doodle {
    margin-left: 26px;
    flex-shrink: 0;
}

.task-icons {
    display: flex;
    align-items: center;
    height: 40px;
}

.task-ic {
    width: 49.3px;
    height: 40px;
    display: flex;
    align-items: center;
    justify-content: center;
}

.active-app {
    background: #eceaef;
    border-bottom: 2px solid #0b78d0;
}

.tray {
    flex: 1;
    display: flex;
    align-items: center;
    height: 40px;
    font-size: 13px;
}

.news {
    margin-left: 95px;
}

.weather {
    margin-left: 8px;
    white-space: nowrap;
}

.tray-up {
    margin-left: 25px;
}

.battery {
    margin-left: 10px;
}

.tablet {
    margin-left: 8px;
}

.lang {
    margin-left: 9px;
    width: 28px;
    padding-top: 2px;
    font-size: 12px;
    line-height: 17px;
}

.clock {
    width: 68px;
    padding-top: 2px;
    text-align: center;
    font-size: 11.5px;
    line-height: 18px;
}

.notify {
    margin-left: 10px;
}
```
